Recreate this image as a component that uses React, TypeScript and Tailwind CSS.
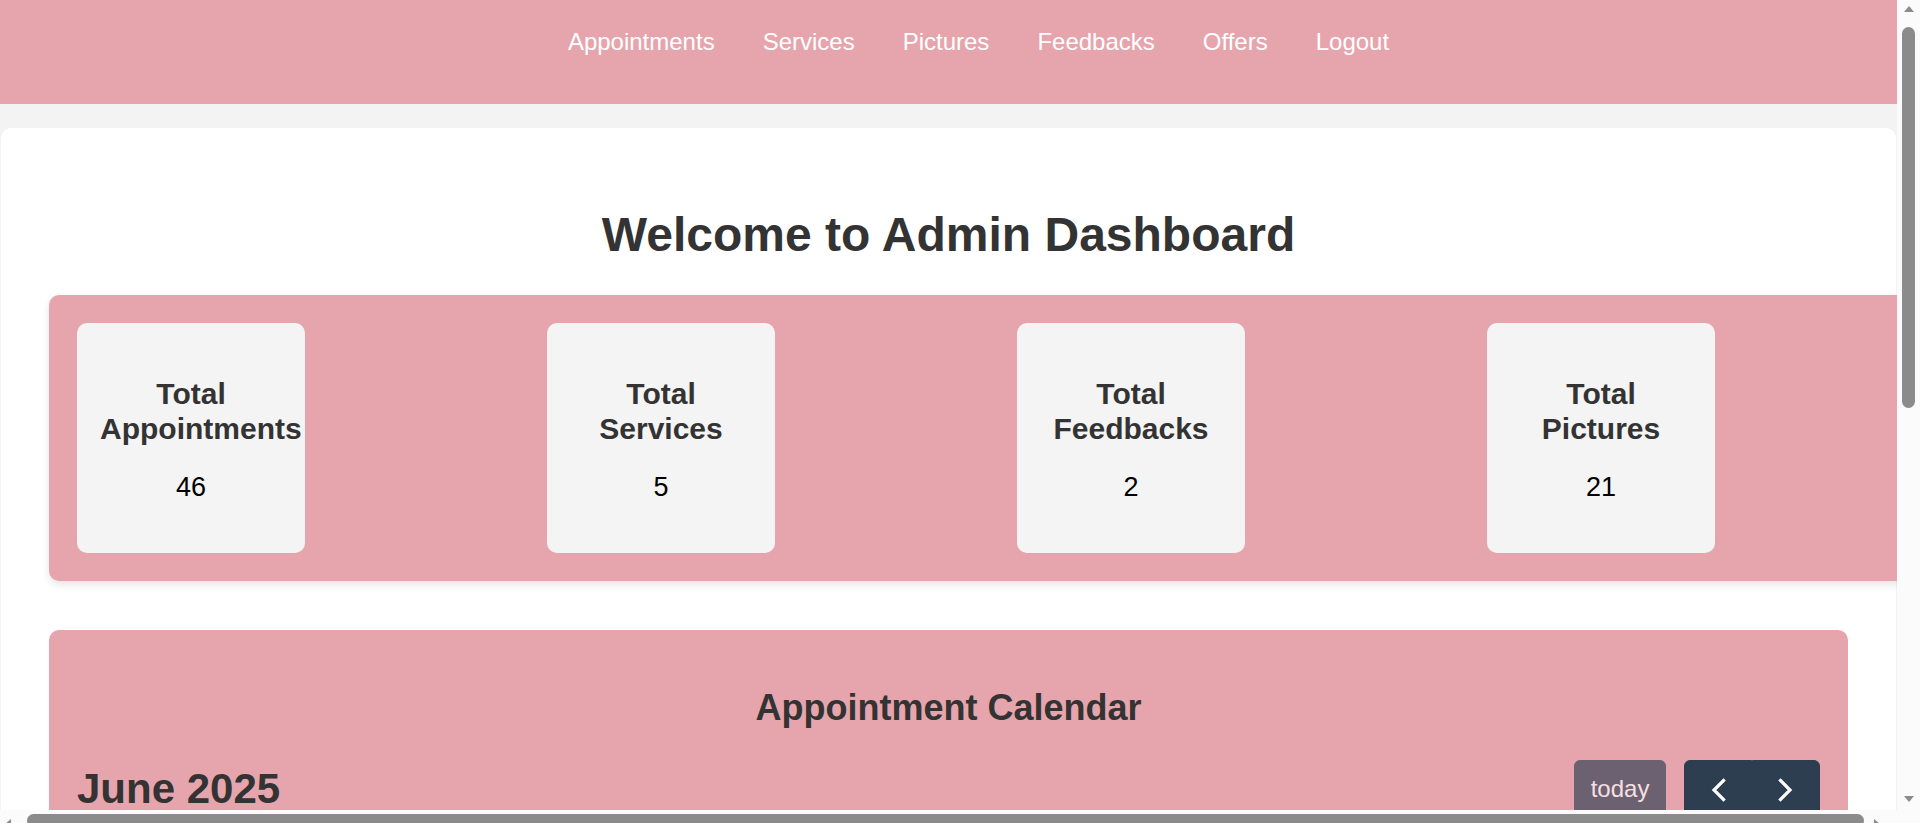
const links = ["Appointments", "Services", "Pictures", "Feedbacks", "Offers", "Logout"];

const stats = [
  { label: "Total Appointments", value: 46 },
  { label: "Total Services", value: 5 },
  { label: "Total Feedbacks", value: 2 },
  { label: "Total Pictures", value: 21 },
];

const weekDays = ["Sun", "Mon", "Tue", "Wed", "Thu", "Fri", "Sat"];

// June 2025 starts on a Sunday, six weeks shown like FullCalendar does
const weeks = Array.from({ length: 6 }, (_, w) =>
  Array.from({ length: 7 }, (_, d) => {
    const n = w * 7 + d + 1;
    return n <= 30 ? { day: n, other: false } : { day: n - 30, other: true };
  })
);

export default function App() {
  return (
    <div className="flex h-screen flex-col overflow-hidden font-['Liberation_Sans',Arial,sans-serif]">
      <div className="flex h-[810px] shrink-0">
        <div className="w-[1897px] shrink-0 overflow-hidden bg-[#f3f3f3]">
          <header className="h-[104px] bg-[#e6a5ad]">
            <nav>
              <ul className="flex justify-center gap-[48px] pl-[60px] pt-[28px]">
                {links.map((l) => (
                  <li key={l}>
                    <a href="#" className="text-[24px] leading-[28px] text-white">
                      {l}
                    </a>
                  </li>
                ))}
              </ul>
            </nav>
          </header>

          <main className="mx-[1px] mt-[24px] mb-[24px] rounded-[10px] bg-white p-[48px]">
            <h1 className="mt-[31px] mb-[33px] text-center text-[48px] font-bold leading-[55px] text-[#333]">
              Welcome to Admin Dashboard
            </h1>

            <section className="flex w-[1875px] gap-[242px] rounded-[10px] bg-[#e6a5ad] p-[28px] shadow-[0_4px_8px_rgba(0,0,0,0.1)]">
              {stats.map((s) => (
                <StatCard key={s.label} label={s.label} value={s.value} />
              ))}
            </section>

            <section className="mt-[49px] rounded-[10px] bg-[#e6a5ad] p-[28px]">
              <h2 className="mt-[29px] mb-[32px] text-center text-[36px] font-bold leading-[41px] text-[#333]">
                Appointment Calendar
              </h2>

              <div className="mb-[36px] flex items-center justify-between">
                <h2 className="text-[42px] font-bold leading-[48px] text-[#333]">June 2025</h2>
                <div className="flex items-center gap-[18px]">
                  <button
                    disabled
                    className="rounded-[6px] border border-[#2c3e50] bg-[#2c3e50] px-[15.6px] py-[9.6px] text-[24px] leading-[36px] text-white opacity-65"
                  >
                    today
                  </button>
                  <div className="flex">
                    <button className="rounded-l-[6px] border border-[#2c3e50] bg-[#2c3e50] px-[15px] py-[9.6px]">
                      <Chevron dir="left" />
                    </button>
                    <button className="rounded-r-[6px] border border-[#2c3e50] bg-[#2c3e50] px-[15px] py-[9.6px]">
                      <Chevron dir="right" />
                    </button>
                  </div>
                </div>
              </div>

              <div className="border border-[#ddd]">
                <div className="grid grid-cols-7">
                  {weekDays.map((d) => (
                    <div key={d} className="border-r border-b border-[#ddd] py-[6px] text-center text-[20px] font-bold text-[#333] last:border-r-0">
                      {d}
                    </div>
                  ))}
                </div>
                {weeks.map((week, i) => (
                  <div key={i} className="grid grid-cols-7">
                    {week.map((c, j) => (
                      <div
                        key={j}
                        className={`h-[110px] border-r border-b border-[#ddd] p-[6px] text-right text-[20px] last:border-r-0 ${
                          c.other ? "text-[#333]/40" : "text-[#333]"
                        }`}
                      >
                        {c.day}
                      </div>
                    ))}
                  </div>
                ))}
              </div>
            </section>
          </main>
        </div>

        {/* vertical scrollbar */}
        <div className="flex w-[23px] shrink-0 flex-col items-center bg-[#fbfbfb] pt-[6px] pb-[8px]">
          <Arrow dir="up" />
          <div className="mt-[15px] h-[381px] w-[13px] rounded-full bg-[#8b8b8b]" />
          <div className="flex-1" />
          <Arrow dir="down" />
        </div>
      </div>

      {/* horizontal scrollbar, cut by the window edge */}
      <div className="flex h-[23px] shrink-0 bg-[#fbfbfb]">
        <div className="flex w-[1897px] shrink-0 items-start pt-[4px]">
          <div className="mt-[5px] ml-[5px]">
            <Arrow dir="left" />
          </div>
          <div className="ml-[16px] h-[13px] w-[1837px] rounded-full bg-[#8b8b8b]" />
          <div className="mt-[5px] ml-[10px]">
            <Arrow dir="right" />
          </div>
        </div>
        <div className="w-[23px] shrink-0" />
      </div>
    </div>
  );
}

function StatCard({ label, value }: { label: string; value: number }) {
  return (
    <div className="h-[230px] w-[228px] shrink-0 rounded-[10px] bg-[#f4f4f4] p-[23px] text-center">
      <h3 className="mt-[31px] text-[30px] font-bold leading-[34.5px] text-[#333]">{label}</h3>
      <p className="mt-[26px] text-[27px] leading-[31px] text-black">{value}</p>
    </div>
  );
}

function Chevron({ dir }: { dir: "left" | "right" }) {
  return (
    <svg className="block h-[36px] w-[36px]" viewBox="0 0 36 36" fill="none" stroke="white" strokeWidth={3.2} strokeLinecap="square" strokeLinejoin="miter">
      {dir === "left" ? <path d="M23.5 9.5 L14 19 L23.5 28.5" /> : <path d="M12.5 9.5 L22 19 L12.5 28.5" />}
    </svg>
  );
}

function Arrow({ dir }: { dir: "up" | "down" | "left" | "right" }) {
  const points = {
    up: "0,6 5,0 10,6",
    down: "0,0 10,0 5,6",
    left: "6,0 6,10 0,5",
    right: "0,0 6,5 0,10",
  }[dir];
  const vertical = dir === "up" || dir === "down";
  return (
    <svg className={vertical ? "block h-[6px] w-[10px]" : "block h-[10px] w-[6px]"} viewBox={vertical ? "0 0 10 6" : "0 0 6 10"}>
      <polygon points={points} fill="#8b8b8b" />
    </svg>
  );
}
